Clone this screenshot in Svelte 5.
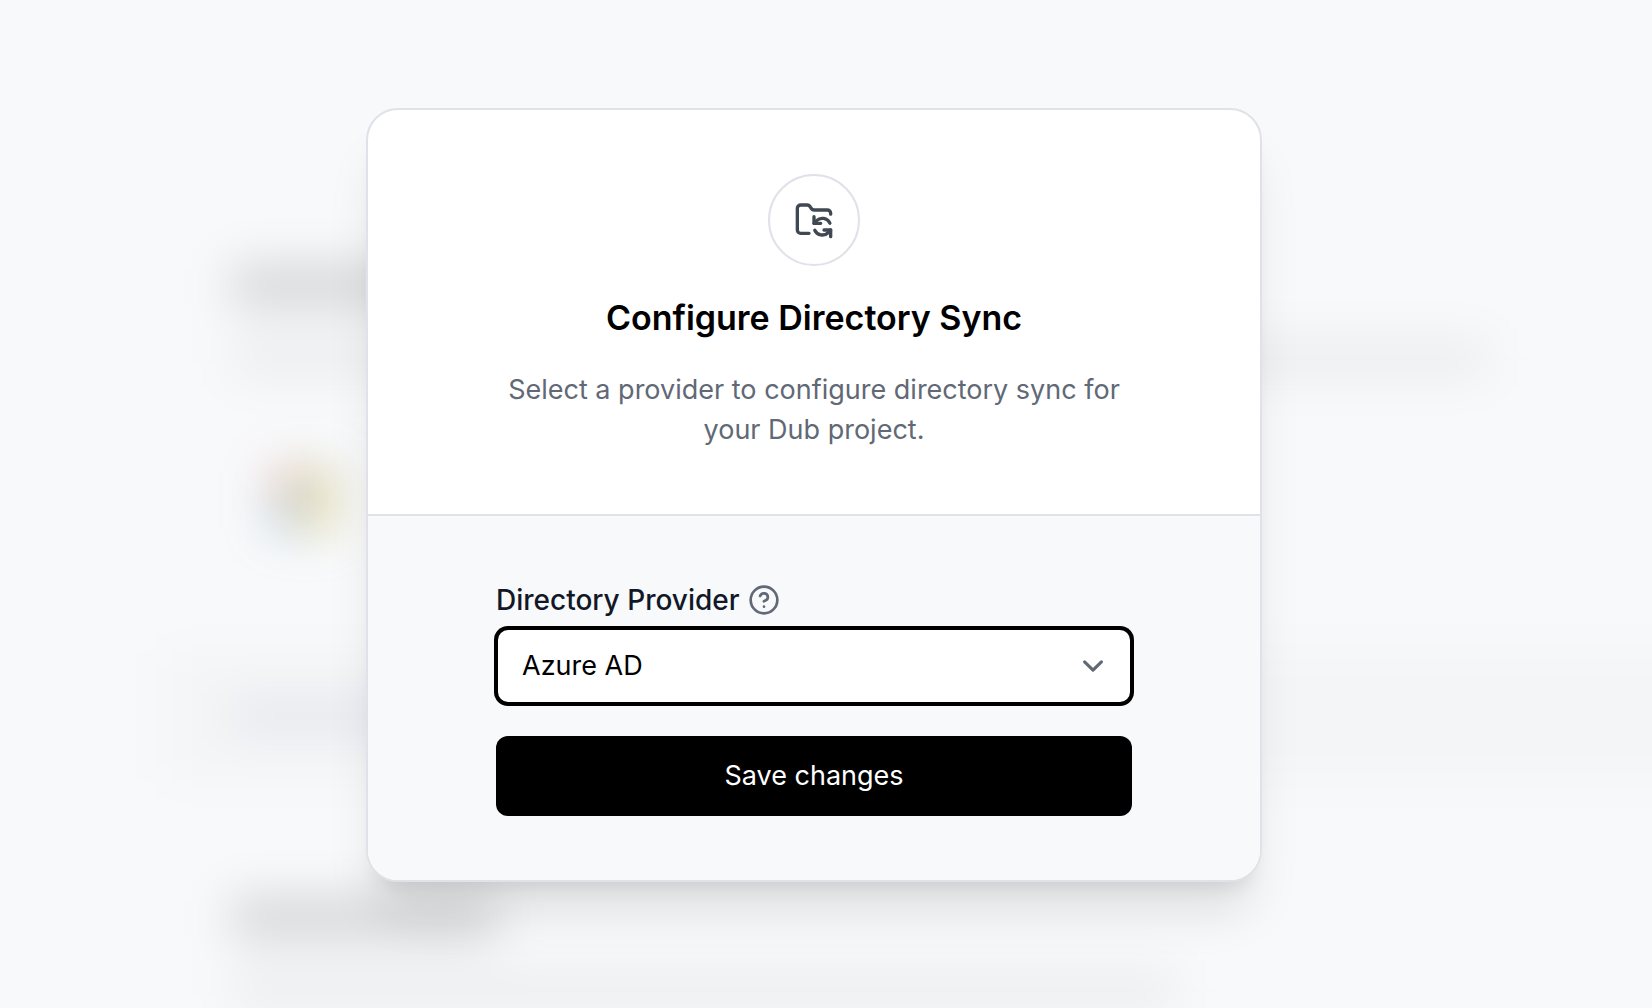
<script lang="ts">
  interface Provider {
    id: string;
    name: string;
  }

  const providers: Provider[] = [
    { id: "azure", name: "Azure AD" },
    { id: "okta", name: "Okta" },
    { id: "google", name: "Google" },
  ];

  let selected = $state("azure");

  function handleSubmit(e: SubmitEvent) {
    e.preventDefault();
  }
</script>

<div class="page">
  <!-- Settings page behind the modal, out of focus -->
  <div class="backdrop" aria-hidden="true">
    <div class="topbar"></div>
    <div class="panel">
      <div class="panel-body">
        <div class="heading wide"></div>
        <div class="description wide"></div>
        <div class="logo">
          <span class="red"></span>
          <span class="green"></span>
          <span class="blue"></span>
          <span class="yellow"></span>
        </div>
      </div>
      <div class="panel-footer"><div class="note"></div></div>
    </div>
    <div class="panel">
      <div class="panel-body">
        <div class="heading"></div>
        <div class="description"></div>
      </div>
    </div>
  </div>

  <div class="overlay">
    <div class="modal" role="dialog" aria-modal="true" aria-labelledby="modal-title">
      <header class="modal-header">
        <div class="icon-circle">
          <svg class="icon folder" viewBox="0 0 24 24" aria-hidden="true">
            <path
              d="M9 20H4a2 2 0 0 1-2-2V5a2 2 0 0 1 2-2h3.9a2 2 0 0 1 1.69.9l.81 1.2a2 2 0 0 0 1.67.9H20a2 2 0 0 1 2 2v.5"
            />
            <path d="M12 10v4h4" />
            <path d="m12 14 1.535-1.605a5 5 0 0 1 8 1.5" />
            <path d="M22 22v-4h-4" />
            <path d="m22 18-1.535 1.605a5 5 0 0 1-8-1.5" />
          </svg>
        </div>
        <h3 id="modal-title">Configure Directory Sync</h3>
        <p>Select a provider to configure directory sync for your Dub project.</p>
      </header>

      <form class="modal-form" onsubmit={handleSubmit}>
        <div class="field">
          <div class="label-row">
            <label for="provider">Directory Provider</label>
            <button type="button" class="help" aria-label="Help">
              <svg class="icon" viewBox="0 0 24 24" aria-hidden="true">
                <circle cx="12" cy="12" r="10" />
                <path d="M9.09 9a3 3 0 0 1 5.83 1c0 2-3 3-3 3" />
                <path d="M12 17h.01" />
              </svg>
            </button>
          </div>
          <div class="select-wrap">
            <select id="provider" name="provider" bind:value={selected}>
              {#each providers as provider (provider.id)}
                <option value={provider.id}>{provider.name}</option>
              {/each}
            </select>
            <svg class="icon chevron" viewBox="0 0 20 20" aria-hidden="true">
              <path d="m6 8 4 4 4-4" />
            </svg>
          </div>
        </div>
        <button type="submit" class="save">Save changes</button>
      </form>
    </div>
  </div>
</div>

<style>
  :global(body) {
    background-color: #f8f9fb;
  }

  .page {
    --bg: #f8f9fb;
    --border: #e1e2e9;
    --muted: #616876;
    --radius: 12px;

    display: grid;
    height: 100vh;
    overflow: hidden;
    background-color: var(--bg);
    font-family: Inter, "Liberation Sans", sans-serif;
    font-size: 27px;
    line-height: 40px;
  }

  .backdrop,
  .overlay {
    grid-area: 1 / 1;
    min-width: 0;
    min-height: 0;
  }

  .backdrop {
    filter: blur(24px);
  }

  .topbar {
    height: 88px;
    margin: 0 -80px;
    border-bottom: 2px solid rgb(0 0 0 / 0.05);
  }

  .panel {
    margin: 112px -80px 0 164px;
  }

  .panel-body {
    display: flex;
    flex-direction: column;
    gap: 36px;
    padding: 64px 68px 0;
  }

  .heading {
    width: 264px;
    height: 40px;
    background-color: rgb(0 0 0 / 0.15);
  }

  .heading.wide {
    width: 380px;
  }

  .description {
    width: 944px;
    height: 32px;
    background-color: rgb(0 0 0 / 0.06);
  }

  .description.wide {
    width: 1256px;
  }

  .logo {
    display: grid;
    grid-template-columns: 28px 28px;
    grid-template-rows: 28px 28px;
    gap: 4px;
    margin: 60px 0 0 40px;
  }

  .red {
    background-color: rgb(200 90 60 / 0.4);
  }

  .green {
    background-color: rgb(160 160 40 / 0.5);
  }

  .blue {
    background-color: rgb(40 120 180 / 0.4);
  }

  .yellow {
    background-color: rgb(210 180 40 / 0.5);
  }

  .panel-footer {
    display: flex;
    align-items: center;
    height: 132px;
    margin-top: 120px;
    padding: 0 68px;
    background-color: rgb(0 0 0 / 0.016);
  }

  .note {
    width: 400px;
    height: 28px;
    background-color: rgb(20 20 40 / 0.07);
  }

  .panel + .panel {
    margin-top: 52px;
  }

  .overlay {
    z-index: 1;
    display: flex;
    align-items: flex-start;
    justify-content: center;
    padding: 108px 24px 0 0;
  }

  .modal {
    box-sizing: border-box;
    width: 896px;
    max-width: 100%;
    overflow: hidden;
    background-color: #fff;
    border: 2px solid var(--border);
    border-radius: 32px;
    box-shadow:
      0 40px 50px -10px rgb(0 0 0 / 0.1),
      0 16px 20px -12px rgb(0 0 0 / 0.1);
  }

  .modal-header {
    display: flex;
    flex-direction: column;
    align-items: center;
    gap: 24px;
    padding: 64px 128px;
    border-bottom: 2px solid var(--border);
    text-align: center;
  }

  .icon-circle {
    box-sizing: border-box;
    display: grid;
    place-items: center;
    width: 92px;
    height: 92px;
    border: 2px solid var(--border);
    border-radius: 50%;
  }

  .icon {
    display: block;
    width: 32px;
    height: 32px;
    fill: none;
    stroke: currentColor;
    stroke-width: 2;
    stroke-linecap: round;
    stroke-linejoin: round;
  }

  .folder {
    width: 40px;
    height: 40px;
    color: #404854;
  }

  h3 {
    margin: 0;
    color: #000;
    font-size: 34px;
    font-weight: 600;
    line-height: 56px;
  }

  p {
    margin: 0;
    color: var(--muted);
  }

  .modal-form {
    display: flex;
    flex-direction: column;
    gap: 32px;
    padding: 64px 128px;
    background-color: var(--bg);
  }

  .field {
    display: flex;
    flex-direction: column;
    gap: 8px;
  }

  .label-row {
    display: flex;
    align-items: center;
    gap: 8px;
  }

  label {
    color: #111827;
    font-size: 28px;
    font-weight: 500;
  }

  .help {
    padding: 0;
    border: none;
    background: transparent;
    color: var(--muted);
    cursor: pointer;
  }

  .select-wrap {
    display: grid;
    align-items: center;
  }

  select {
    grid-area: 1 / 1;
    box-sizing: border-box;
    width: 100%;
    height: 76px;
    padding: 0 80px 0 24px;
    appearance: none;
    background-color: #fff;
    border: 2px solid #000;
    border-radius: var(--radius);
    box-shadow: 0 0 0 2px #000;
    color: #000;
    font: inherit;
    outline: none;
  }

  .chevron {
    grid-area: 1 / 1;
    justify-self: end;
    width: 42px;
    height: 42px;
    margin-right: 18px;
    color: var(--muted);
    stroke-width: 1.5;
    pointer-events: none;
  }

  .save {
    height: 80px;
    padding: 0 32px;
    background-color: #000;
    border: none;
    border-radius: var(--radius);
    color: #fff;
    font: inherit;
    cursor: pointer;
  }
</style>
